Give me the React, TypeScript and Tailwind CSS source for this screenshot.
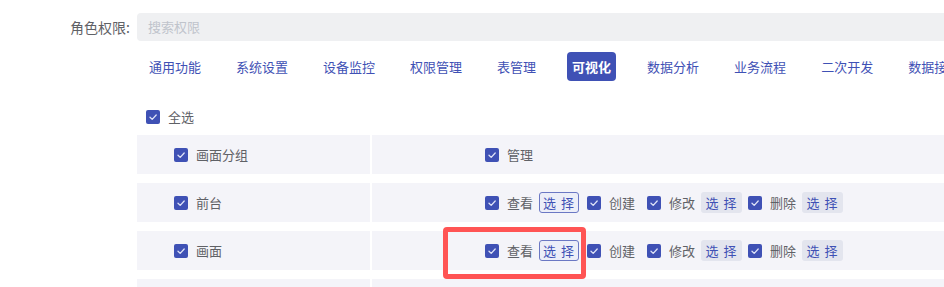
import React from "react";

const tabs = ["通用功能", "系统设置", "设备监控", "权限管理", "表管理", "可视化", "数据分析", "业务流程", "二次开发", "数据接口"];

function Check() {
  return (
    <span className="w-[14px] h-[14px] shrink-0 rounded-[2px] bg-[#3f51b5] flex items-center justify-center">
      <svg width="14" height="14" viewBox="0 0 14 14">
        <polyline points="4,7.2 6.2,9.4 10.2,5" fill="none" stroke="#dfe3f7" strokeWidth="1.3" strokeLinecap="round" strokeLinejoin="round" />
      </svg>
    </span>
  );
}

function PickBtn({ outlined }: { outlined?: boolean }) {
  return (
    <span
      className={
        outlined
          ? "h-[21px] w-[40px] rounded-[3px] border border-[#6b78c4] bg-[#eceef8] text-[#3f51b5] flex items-center justify-center leading-none tracking-[1px]"
          : "h-[21px] w-[41px] rounded-[3px] bg-[#e3e5ee] text-[#3f51b5] flex items-center justify-center leading-none tracking-[1px]"
      }
    >
      选 择
    </span>
  );
}

function Actions() {
  return (
    <div className="flex items-center">
      <Check />
      <span className="ml-[8px]">查看</span>
      <span className="ml-[6px]"><PickBtn outlined /></span>
      <span className="ml-[8px]"><Check /></span>
      <span className="ml-[8px]">创建</span>
      <span className="ml-[12px]"><Check /></span>
      <span className="ml-[8px]">修改</span>
      <span className="ml-[6px]"><PickBtn /></span>
      <span className="ml-[6px]"><Check /></span>
      <span className="ml-[8px]">删除</span>
      <span className="ml-[6px]"><PickBtn /></span>
    </div>
  );
}

export default function App() {
  const rows = [
    { name: "画面分组", right: <div className="flex items-center"><Check /><span className="ml-[8px]">管理</span></div> },
    { name: "前台", right: <Actions /> },
    { name: "画面", right: <Actions /> },
    { name: "", right: null },
  ];

  return (
    <div className="relative w-[944px] h-[287px] overflow-hidden bg-white text-[13px] text-[#5f6166] font-['Noto_Sans_CJK_SC',sans-serif]">
      <div className="w-[1200px]">
        {/* SEARCH */}
        <div className="flex pt-[13px]">
          <label className="w-[137px] pr-[7px] text-right leading-[28px] text-[14px] text-[#5f6166]">角色权限:</label>
          <div className="h-[28px] flex-1 rounded-[4px] bg-[#eff0f2] px-[11px] leading-[28px] text-[#c0c4cc]">搜索权限</div>
        </div>

        {/* TABS */}
        <div className="mt-[11px] ml-[145px] flex gap-[27px]">
          {tabs.map((t) => (
            <span
              key={t}
              className={
                t === "可视化"
                  ? "h-[29px] px-[5px] rounded-[4px] bg-[#3f51b5] text-white font-bold leading-[29px]"
                  : "h-[29px] px-[4px] leading-[29px] text-[#3f51b5]"
              }
            >
              {t}
            </span>
          ))}
        </div>

        {/* SELECT ALL */}
        <div className="mt-[26px] ml-[146px] h-[20px] flex items-center">
          <Check />
          <span className="ml-[8px]">全选</span>
        </div>

        {/* TABLE */}
        <div className="mt-[8px] ml-[137px] flex flex-col gap-[9px]">
          {rows.map((r, i) => (
            <div key={i} className="flex h-[39px]">
              <div className="w-[233px] mr-[2px] bg-[#f4f4f9] pl-[37px] flex items-center">
                {r.name && (
                  <>
                    <Check />
                    <span className="ml-[8px]">{r.name}</span>
                  </>
                )}
              </div>
              <div className="flex-1 bg-[#f4f4f9] pl-[113px] flex items-center">{r.right}</div>
            </div>
          ))}
        </div>
      </div>

      {/* HIGHLIGHT */}
      <div className="absolute left-[443px] top-[227px] w-[143px] h-[52px] border-[5px] border-[#ff5454] rounded-[4px]" />
    </div>
  );
}
